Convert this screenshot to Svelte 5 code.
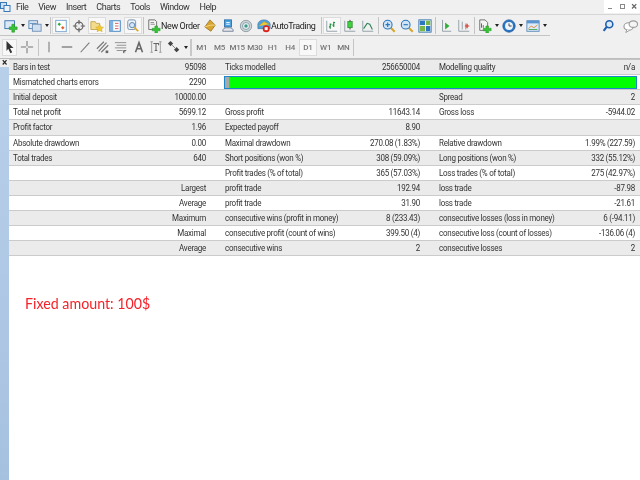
<script>
  const menus = ['File', 'View', 'Insert', 'Charts', 'Tools', 'Window', 'Help'];
  const top = [
    { w: 24, i: 'newchart', caret: 1 }, { w: 23, i: 'profiles', caret: 1 }, { sep: 1 },
    { w: 18, i: 'market', on: 1 }, { w: 18, i: 'cross' }, { w: 18, i: 'star', on: 1 }, { w: 18, i: 'nav' }, { w: 18, i: 'tester', on: 1 }, { sep: 1 },
    { w: 56, i: 'order', text: 'New Order' }, { w: 18, i: 'gem' }, { w: 18, i: 'server' }, { w: 18, i: 'signal' }, { w: 65, i: 'auto', text: 'AutoTrading' }, { sep: 1 },
    { w: 18, i: 'bars', on: 1 }, { w: 18, i: 'candle' }, { w: 18, i: 'line' }, { sep: 1 },
    { w: 18, i: 'zin' }, { w: 18, i: 'zout' }, { w: 18, i: 'tile' }, { sep: 1 },
    { w: 18, i: 'shift' }, { w: 18, i: 'auto2' }, { sep: 1 },
    { w: 24, i: 'indic', caret: 1 }, { w: 24, i: 'clock', caret: 1 }, { w: 26, i: 'tmpl', caret: 1 }
  ];
  const second = [
    { w: 15, i: 'arrow', on: 1 }, { w: 20, i: 'plus' }, { sep: 1 },
    { w: 18, i: 'vline' }, { w: 18, i: 'hline' }, { w: 18, i: 'tline' }, { w: 18, i: 'chan' }, { w: 18, i: 'fibo' }, { w: 17, i: 'atext' }, { w: 18, i: 'tbox' }, { w: 24, i: 'shapes', caret: 1 }, { sep: 2 }
  ];
  const periods = ['M1', 'M5', 'M15', 'M30', 'H1', 'H4', 'D1', 'W1', 'MN'];
  const rows = [
    ['Bars in test', '95098', 'Ticks modelled', '256650004', 'Modelling quality', 'n/a'],
    ['Mismatched charts errors', '2290', 'BAR'],
    ['Initial deposit', '10000.00', '', '', 'Spread', '2'],
    ['Total net profit', '5699.12', 'Gross profit', '11643.14', 'Gross loss', '-5944.02'],
    ['Profit factor', '1.96', 'Expected payoff', '8.90', '', ''],
    ['Absolute drawdown', '0.00', 'Maximal drawdown', '270.08 (1.83%)', 'Relative drawdown', '1.99% (227.59)'],
    ['Total trades', '640', 'Short positions (won %)', '308 (59.09%)', 'Long positions (won %)', '332 (55.12%)'],
    ['', '', 'Profit trades (% of total)', '365 (57.03%)', 'Loss trades (% of total)', '275 (42.97%)'],
    ['', 'Largest', 'profit trade', '192.94', 'loss trade', '-87.98'],
    ['', 'Average', 'profit trade', '31.90', 'loss trade', '-21.61'],
    ['', 'Maximum', 'consecutive wins (profit in money)', '8 (233.43)', 'consecutive losses (loss in money)', '6 (-94.11)'],
    ['', 'Maximal', 'consecutive profit (count of wins)', '399.50 (4)', 'consecutive loss (count of losses)', '-136.06 (4)'],
    ['', 'Average', 'consecutive wins', '2', 'consecutive losses', '2']
  ];
</script>

{#snippet icon(n)}
  <svg class="ic" viewBox="0 0 16 16">
    {#if n === 'newchart'}
      <rect x="1" y="2" width="11" height="9" fill="#dbe9f7" stroke="#2f6fb0"/><path d="M9 6h3v3h3v3h-3v3H9v-3H6V9h3z" fill="#35c435" stroke="#1d8a1d" stroke-width=".6"/>
    {:else if n === 'profiles'}
      <rect x="1" y="2" width="10" height="9" fill="#e4ecf6" stroke="#4f7fb5"/><rect x="5" y="6" width="10" height="8" fill="#cfdff0" stroke="#6d8fb5"/><path d="M2 5h8" stroke="#4f7fb5"/>
    {:else if n === 'market'}
      <rect x="2" y="1.5" width="12" height="13" fill="#fff" stroke="#6a9ccc"/><path d="M4 6l2-2 2 2-2 2z" fill="#2fae3a"/><path d="M8 10l2-2 2 2-2 2z" fill="#e0602a"/>
    {:else if n === 'cross'}
      <circle cx="8" cy="8" r="4.5" fill="none" stroke="#666" stroke-width="1.4"/><path d="M8 1v5M8 10v5M1 8h5M10 8h5" stroke="#666" stroke-width="1.4"/>
    {:else if n === 'star'}
      <path d="M1 3h5l1 2h4v7H1z" fill="#f3dc8c" stroke="#c2a44a"/><path d="M11 6l1.5 3 3 .4-2.2 2.1.6 3-2.900-1.500-2.900 1.500.6-3-2.200-2.100 3-.4z" fill="#f1c92e" stroke="#c79e1e" stroke-width=".5"/>
    {:else if n === 'nav'}
      <rect x="2" y="2" width="12" height="12" fill="#fff" stroke="#2f78bd"/><rect x="2" y="2" width="4" height="12" fill="#7fb2e0"/><path d="M8 5h4M8 8h4M8 11h4" stroke="#d05050"/>
    {:else if n === 'tester'}
      <rect x="2" y="1" width="9" height="11" rx="2" fill="#eef3f8" stroke="#6c88a8"/><circle cx="7" cy="7" r="3" fill="#d6e6f6" stroke="#4d7eaf"/><path d="M9.500 9.500L14 14" stroke="#d8a62a" stroke-width="2"/>
    {:else if n === 'order'}
      <path d="M2 1h7l2 2v9H2z" fill="#f4f4f4" stroke="#666"/><path d="M4 4h4M4 6h5" stroke="#888"/><path d="M9 8h3v2.500h3v3h-3V16H9v-2.500H6v-3h3z" fill="#35c435" stroke="#1d8a1d" stroke-width=".5"/>
    {:else if n === 'gem'}
      <path d="M8 1l6 6-5 7-7-5z" fill="#d9a52e" stroke="#8a6414" stroke-width=".8"/><path d="M2 9l7-2 5 0" stroke="#f3dc8c" fill="none"/>
    {:else if n === 'server'}
      <rect x="4" y="1" width="8" height="8" fill="#4da3e0" stroke="#2a6fa8"/><path d="M6 4h4M6 6h4" stroke="#fff"/><path d="M2 14c0-3 2-4 4-4h4c2 0 4 1 4 4z" fill="#e3e7ee" stroke="#6c7c92"/>
    {:else if n === 'signal'}
      <circle cx="8" cy="8" r="6.500" fill="#cfd6dc" stroke="#8b979f"/><circle cx="8" cy="8" r="4" fill="#eef2f3" stroke="#7d9ba0"/><circle cx="8" cy="8" r="2" fill="#3c9d8a"/>
    {:else if n === 'auto'}
      <path d="M1 6a7 5 0 0 1 14 0v5H1z" fill="#4da3e0" stroke="#37709f" stroke-width=".7"/><path d="M2 8l6-5 6 3" fill="#f1c92e" stroke="#c79e1e" stroke-width=".7"/><circle cx="10.500" cy="11" r="4" fill="#d9241d"/><rect x="8.800" y="9.300" width="3.400" height="3.400" fill="#fff"/>
    {:else if n === 'bars'}
      <path d="M2 2v12h12" stroke="#8a9aa0" fill="none"/><path d="M6 5v6M4.500 9H6M6 6h1.500M10 3v6M8.500 7H10M10 4h1.500" stroke="#1c8f3f" stroke-width="1.300" fill="none"/>
    {:else if n === 'candle'}
      <path d="M2 2v12h12" stroke="#8a9aa0" fill="none"/><path d="M8 1v11" stroke="#333"/><rect x="5.500" y="3" width="5" height="7" fill="#3fd13f" stroke="#1d7a1d" stroke-width=".7"/>
    {:else if n === 'line'}
      <path d="M2 2v12h12" stroke="#8a9aa0" fill="none"/><path d="M3 11l4-6 3 1 3 6" stroke="#2b7f55" stroke-width="1.200" fill="none"/>
    {:else if n === 'zin' || n === 'zout'}
      <path d="M9.500 9.500L14.500 14.500" stroke="#d8a62a" stroke-width="2.400"/><circle cx="6.500" cy="6.500" r="5" fill="#cfe4f7" stroke="#2a77bd" stroke-width="1.200"/><path d={n === 'zin' ? 'M4 6.500h5M6.500 4v5' : 'M4 6.500h5'} stroke="#2a77bd" stroke-width="1.300"/>
    {:else if n === 'tile'}
      <rect x="1" y="1" width="14" height="14" fill="#fff" stroke="#2a6fa8"/><rect x="2" y="2" width="6" height="5" fill="#2a77bd"/><rect x="9" y="2" width="5" height="5" fill="#7ab648"/><rect x="2" y="8" width="6" height="6" fill="#7ab648"/><rect x="9" y="8" width="5" height="6" fill="#2a77bd"/>
    {:else if n === 'shift'}
      <path d="M4 1v13h10" stroke="#8a9aa0" fill="none"/><path d="M7 4l5 4-5 4z" fill="#2fae3a"/>
    {:else if n === 'auto2'}
      <path d="M2 1v13h12M6 3v9M10 5v7" stroke="#8a9aa0" fill="none"/><path d="M9 8h5M11.500 5.500v5" stroke="#d9362a" stroke-width="1.400"/>
    {:else if n === 'indic'}
      <path d="M2 1h6l3 3v9H2z" fill="#f4f4f4" stroke="#666"/><path d="M4 5v5M6 7v3" stroke="#555"/><path d="M9 8h3v2.500h3v3h-3V16H9v-2.500H6v-3h3z" fill="#35c435" stroke="#1d8a1d" stroke-width=".5"/>
    {:else if n === 'clock'}
      <circle cx="8" cy="8" r="7" fill="#2a77c8" stroke="#1c5a9c"/><circle cx="8" cy="8" r="4.500" fill="#eef5fb"/><path d="M8 5v3h3" stroke="#333" fill="none"/>
    {:else if n === 'tmpl'}
      <rect x="1" y="2" width="14" height="12" fill="#dceaf8" stroke="#5285b8"/><rect x="1" y="2" width="14" height="3" fill="#5a95d0"/><path d="M3 11l3-3 3 2 4-3" stroke="#d9802a" fill="none"/><path d="M3 12h10" stroke="#3fa34d"/>
    {:else if n === 'arrow'}
      <path d="M4 1l8 8H8l2.500 5-2 1L6 10l-2 2.500z" fill="#333"/>
    {:else if n === 'plus'}
      <path d="M8 1v6M8 9v6M1 8h6M9 8h6" stroke="#777" stroke-width="1.200"/>
    {:else if n === 'vline'}
      <path d="M8 2v12" stroke="#8a8a8a" stroke-width="1.400"/>
    {:else if n === 'hline'}
      <path d="M2 8h12" stroke="#666" stroke-width="1.300"/>
    {:else if n === 'tline'}
      <path d="M3 14L13 3" stroke="#777" stroke-width="1.200"/>
    {:else if n === 'chan'}
      <path d="M1 10l8-8M3 13l9-10M6 14l8-8" stroke="#777" stroke-width="1.300"/><path d="M11 12h3v3h-3z" fill="#666"/>
    {:else if n === 'fibo'}
      <path d="M1 3h13M3 6h11M1 9h13M3 12h7" stroke="#888"/><path d="M11 12h3M11 12v3M11 13.500h2" stroke="#555"/>
    {:else if n === 'atext'}
      <path d="M4 14L8 3l4 11M5.500 10h5" stroke="#666" stroke-width="1.800" fill="none"/>
    {:else if n === 'tbox'}
      <path d="M3 2v12M13 2v12M1.500 2h3M1.500 14h3M11.500 2h3M11.500 14h3" stroke="#999"/><path d="M5 4h6v2M8 4v8M6.500 12h3" stroke="#666" stroke-width="1.200" fill="none"/>
    {:else if n === 'shapes'}
      <path d="M4 1l3 3-3 3-3-3z" fill="#444"/><path d="M11 8l3 3-3 3-3-3z" fill="#444"/><path d="M6 6l3 3" stroke="#666"/>
    {/if}
  </svg>
{/snippet}

{#snippet tool(t)}
  {#if t.sep}
    <span class="sep" class:double={t.sep === 2}></span>
  {:else}
    <span class="tool" class:on={t.on} class:plain={!t.text && !t.caret} style="width:{t.w}px">
      {@render icon(t.i)}
      {#if t.text}<span class="label">{t.text}</span>{/if}
      {#if t.caret}<span class="caret"></span>{/if}
    </span>
  {/if}
{/snippet}

<div class="app">
  <div class="menubar">
    <svg class="logo" viewBox="0 0 11 12"><rect x=".5" y="1.500" width="6" height="6" fill="#cfe0f3" stroke="#3b78b8"/><rect x="4" y="4.500" width="6" height="6" fill="#eaf2fa" stroke="#3b78b8"/></svg>
    <nav class="menus">{#each menus as m}<span>{m}</span>{/each}</nav>
    <div class="winbtns">
      <span class="min"></span>
      <span class="restore"></span>
      <span class="close">×</span>
    </div>
  </div>

  <div class="bar one">
    {#each top as t}{@render tool(t)}{/each}
    <span class="spring"></span>
    <svg class="ic search" viewBox="0 0 16 16"><circle cx="9.500" cy="6" r="4" fill="#dbe9f7" stroke="#1f5fae" stroke-width="1.800"/><path d="M6.500 9L3 13.500" stroke="#1f5fae" stroke-width="2.400"/></svg>
    <svg class="chat" viewBox="0 0 16 14"><ellipse cx="6" cy="7.500" rx="5" ry="4" fill="#fff" stroke="#9a9a9a" stroke-width="1.200"/><path d="M4 11l-1 3 4-2.500" fill="#fff" stroke="#9a9a9a"/><ellipse cx="11" cy="5" rx="4.500" ry="3.500" fill="#f4f4f4" stroke="#9a9a9a" stroke-width="1.200"/></svg>
  </div>

  <div class="bar two">
    {#each second as t}{@render tool(t)}{/each}
    <div class="periods">
      {#each periods as p}<span class="period" class:on={p === 'D1'}>{p}</span>{/each}
    </div>
    <span class="sep"></span>
  </div>

  <div class="main">
    <aside class="side"><span class="sidex">×</span></aside>
    <section class="content">
      <div class="report">
        {#each rows as r, idx}
          <div class="row" class:alt={idx % 2 === 0}>
            <span class="l first">{r[0]}</span>
            <span class="v">{r[1]}</span>
            {#if r[2] === 'BAR'}
              <div class="progress"><span class="chunk"></span><span class="fill"></span></div>
            {:else}
              <span class="l">{r[2]}</span>
              <span class="v">{r[3]}</span>
              <span class="l">{r[4]}</span>
              <span class="v">{r[5]}</span>
            {/if}
          </div>
        {/each}
      </div>
      <p class="note">Fixed amount: 100$</p>
    </section>
  </div>
</div>

<style>
  :global(body) { margin: 0; background: #f0f0f0; overflow: hidden; }
  .app { width: 640px; height: 480px; display: flex; flex-direction: column; font-family: Roboto, "Liberation Sans", sans-serif; font-size: 9px; letter-spacing: -.3px; color: #333; overflow: hidden; background: #f0f0f0; filter: blur(.25px); }

  .menubar { height: 14px; display: flex; align-items: center; flex: none; }
  .logo { width: 11px; height: 12px; flex: none; }
  .menus { display: flex; gap: 10px; margin-left: 5px; font-size: 9px; letter-spacing: -.45px; }
  .winbtns { margin-left: auto; width: 36px; height: 13px; background: #fff; display: grid; grid-template-columns: repeat(3, 12px); align-items: center; justify-items: center; align-self: flex-start; }
  .min { width: 4px; height: 1px; background: #888; margin-top: 4px; }
  .restore { width: 5px; height: 5px; border: 1px solid #888; box-sizing: border-box; }
  .close { font-size: 11px; line-height: 11px; color: #666; font-weight: 700; }

  .bar { display: flex; align-items: center; flex: none; box-sizing: border-box; }
  .bar.one { height: 22px; padding-left: 2px; border-top: 1px solid #d6d6d6; position: relative; }
  .bar.one::after { content: ""; position: absolute; left: 0; top: 20px; width: 550px; height: 1px; background: #c4c4c4; }
  .bar.two { height: 23px; padding-left: 2px; border-bottom: 1px solid #bdbdbd; }

  .tool { height: 17px; display: flex; align-items: center; justify-content: flex-start; padding-left: 1px; box-sizing: border-box; flex: none; border: 1px solid transparent; gap: 2px; }
  .tool.plain { justify-content: center; padding-left: 0; }
  .tool.on { background: #f8f8f8; border-color: #dcdcdc; }
  .ic { width: 14px; height: 14px; flex: none; }
  .label { font-size: 9px; white-space: nowrap; letter-spacing: -.4px; color: #222; margin-left: -2px; }
  .caret { width: 0; height: 0; border: 2.500px solid transparent; border-top: 3px solid #222; border-bottom: 0; margin-left: 1px; flex: none; }
  .sep { width: 1px; height: 17px; background: #c4c4c4; margin: 0 1px; flex: none; }
  .sep.double { width: 2px; background: #c8c8c8; margin: 0 1px; }
  .spring { flex: 1; }
  .search { margin-right: 8px; }
  .chat { width: 15px; height: 14px; margin-right: 2px; flex: none; }

  .periods { display: flex; font-size: 8px; letter-spacing: -.2px; color: #777; font-weight: 500; }
  .period { width: 17.700px; height: 17px; display: flex; align-items: center; justify-content: center; box-sizing: border-box; }
  .period.on { background: #f8f8f8; border: 1px solid #dcdcdc; }

  .main { flex: 1; display: flex; min-height: 0; }
  .side { width: 9px; flex: none; background: linear-gradient(#b9d0ea, #a6c1e0); position: relative; }
  .sidex { position: absolute; left: 0; top: 0; width: 9px; height: 8px; background: #f0f0f0; font-size: 10px; line-height: 7px; text-align: center; font-weight: 700; color: #222; }
  .content { flex: 1; background: #fff; min-width: 0; }

  .report { border-top: 1px solid #c4c4c4; }
  .row { display: grid; grid-template-columns: 120px 77px 140px 74px 150px 65px; height: 15.120px; box-sizing: border-box; border-bottom: 1px solid #cbcbcb; background: #fff; line-height: 14px; white-space: nowrap; }
  .row.alt { background: #ebebeb; }
  .l { margin-left: 19px; transform: scaleX(.89); transform-origin: left center; }
  .l.first { margin-left: 4px; }
  .v { text-align: right; transform: scaleX(.89); transform-origin: right center; }

  .progress { grid-column: 3 / -1; margin-left: 18px; width: 413px; height: 13px; align-self: center; box-sizing: border-box; border: 1px solid #1b87c9; display: flex; }
  .chunk { width: 4px; background: #a8a8a8; }
  .fill { flex: 1; background: #00ff00; }

  .note { margin: 37px 0 0 16px; font-size: 16px; line-height: 20px; letter-spacing: 0; color: #f5222a; font-family: Lato, "Open Sans", sans-serif; transform: scaleX(.89); transform-origin: left center; }
</style>
